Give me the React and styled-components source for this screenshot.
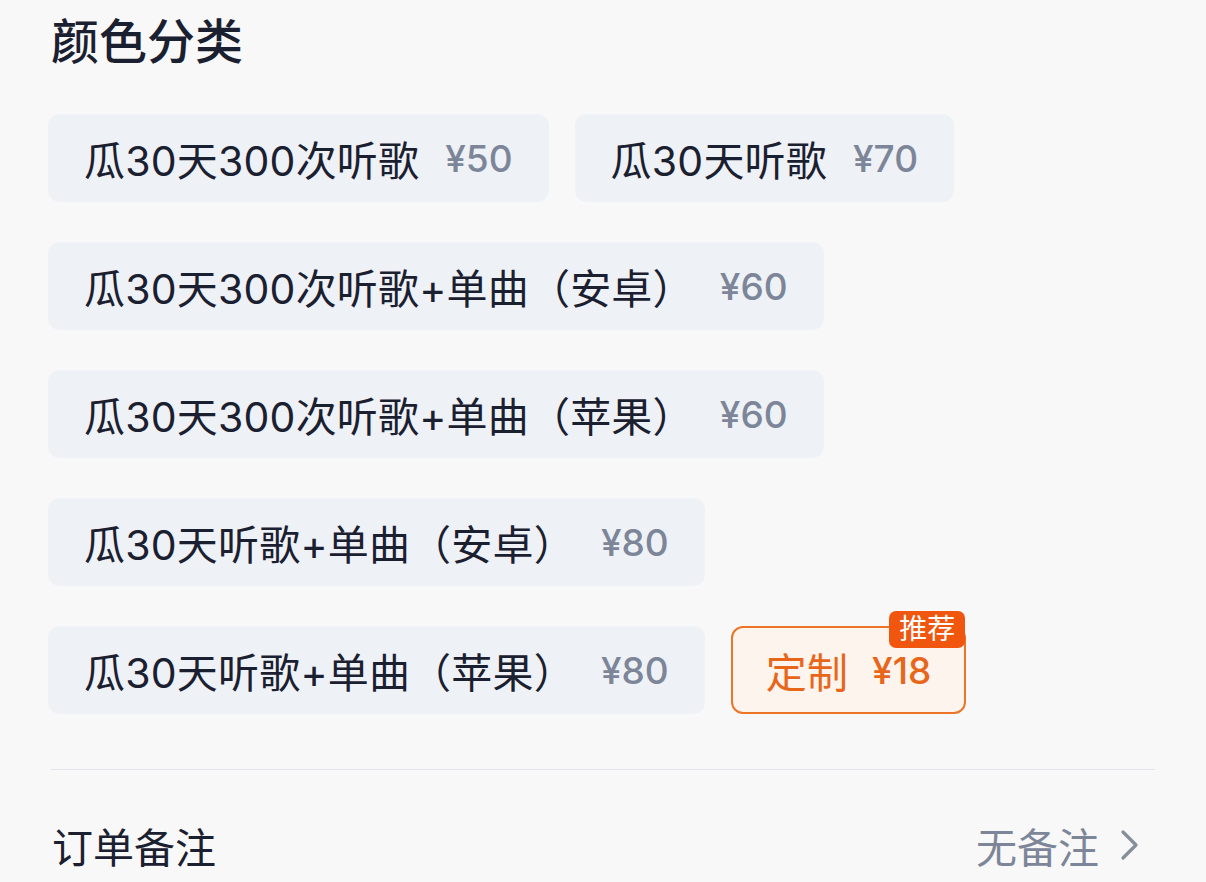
import React from 'react'
import styled, { createGlobalStyle } from 'styled-components'

const GlobalStyle = createGlobalStyle`
  html, body {
    margin: 0;
    padding: 0;
    background: #f8f8f8;
  }
  body {
    font-family: Inter, "Noto Sans CJK SC", sans-serif;
    color: #1b2030;
  }
`

const Page = styled.div`
  width: 1206px;
  height: 882px;
  overflow: hidden;
  padding: 0 51px 0 48px;
  box-sizing: border-box;
`

const Title = styled.h2`
  margin: 0;
  padding: 8px 0 0 3px;
  font-family: "Noto Sans CJK SC", sans-serif;
  font-size: 48px;
  line-height: 60px;
  font-weight: 500;
  color: #1b2030;
`

const Options = styled.div`
  display: flex;
  flex-wrap: wrap;
  column-gap: 26px;
  row-gap: 40px;
  margin-top: 46px;
`

const Chip = styled.div`
  position: relative;
  display: inline-flex;
  align-items: center;
  gap: ${p => (p.$hot ? '24px' : '26px')};
  height: 88px;
  padding: 0 ${p => (p.$hot ? '33px' : '36px')};
  box-sizing: border-box;
  border-radius: 12px;
  background: ${p => (p.$hot ? '#fdf4ed' : '#eef1f5')};
  border: ${p => (p.$hot ? '2px solid #ec7527' : 'none')};
  font-size: 41px;
  color: ${p => (p.$hot ? '#e8661a' : '#1b2030')};
  white-space: nowrap;
`

const Name = styled.span`
  letter-spacing: 0.2px;
`

const Price = styled.span`
  font-size: 37px;
  font-weight: 500;
  color: ${p => (p.$hot ? '#e8661a' : '#7d8698')};
`

const Badge = styled.span`
  position: absolute;
  top: -17px;
  right: -1px;
  padding: 0 10px;
  height: 37px;
  line-height: 37px;
  border-radius: 7px;
  background: #f0560e;
  color: #fff;
  font-size: 28px;
`

const Divider = styled.div`
  height: 1px;
  background: #e2e5ea;
  margin: 55px 0 0 2px;
`

const Row = styled.div`
  display: flex;
  align-items: center;
  justify-content: space-between;
  height: 150px;
  padding-left: 4px;
  font-size: 41px;
`

const Value = styled.div`
  display: flex;
  align-items: center;
  gap: 20px;
  color: #7d8698;
  margin-right: 14px;
`

const options = [
  { name: '瓜30天300次听歌', price: '¥50' },
  { name: '瓜30天听歌', price: '¥70' },
  { name: '瓜30天300次听歌+单曲（安卓）', price: '¥60' },
  { name: '瓜30天300次听歌+单曲（苹果）', price: '¥60' },
  { name: '瓜30天听歌+单曲（安卓）', price: '¥80' },
  { name: '瓜30天听歌+单曲（苹果）', price: '¥80' },
  { name: '定制', price: '¥18', hot: true },
]

export default function App() {
  return (
    <Page>
      <GlobalStyle />
      <Title>颜色分类</Title>
      <Options>
        {options.map(o => (
          <Chip key={o.name} $hot={o.hot}>
            <Name>{o.name}</Name>
            <Price $hot={o.hot}>{o.price}</Price>
            {o.hot && <Badge>推荐</Badge>}
          </Chip>
        ))}
      </Options>
      <Divider />
      <Row>
        <span>订单备注</span>
        <Value>
          无备注
          <svg width="22" height="34" viewBox="0 0 22 34" fill="none">
            <path d="M4 4l13 13L4 30" stroke="#868e9c" strokeWidth="3.2" strokeLinecap="round" strokeLinejoin="round" />
          </svg>
        </Value>
      </Row>
    </Page>
  )
}
